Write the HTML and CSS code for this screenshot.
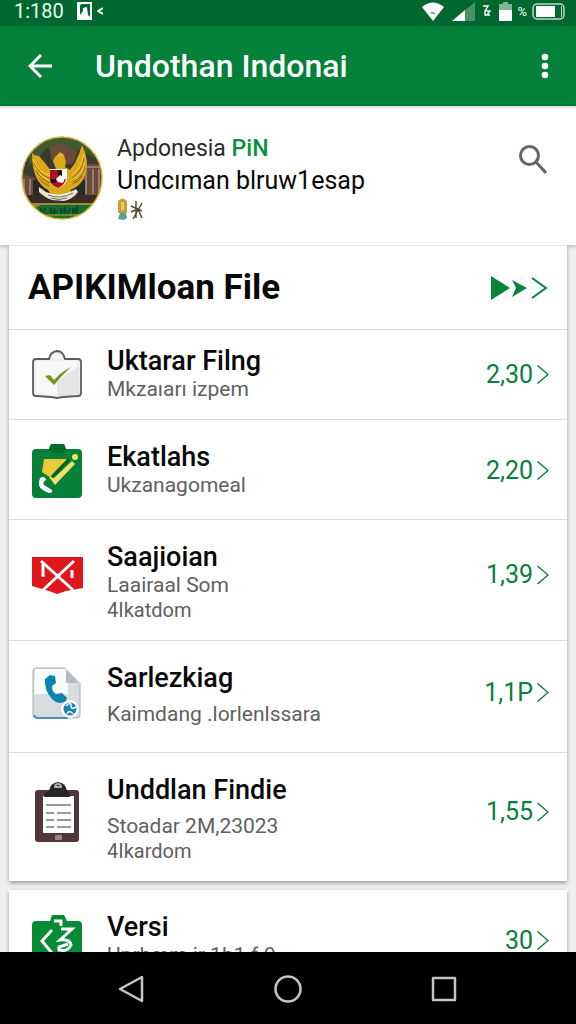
FILE: index.html
```html
<!DOCTYPE html>
<html lang="id">

<head>
    <meta charset="UTF-8">
    <meta name="viewport" content="width=device-width, initial-scale=1.0">
    <title>Undothan Indonai</title>
    <link rel="stylesheet" href="styles.css">
</head>

<body>
    <div class="status">
        <span class="time">1:180</span>
        <svg width="15" height="18" viewBox="0 0 15 18"><path fill="#fff" fill-rule="evenodd" d="M0 0h15v18H0zM3 3v10l3-4V6l4-1 1 8 2 2V2H5z"/></svg>
        <svg class="share" width="6" height="8" viewBox="0 0 6 8" fill="none" stroke="#fff" stroke-width="2"><path d="M6 1L1 4l5 3"/></svg>
        <svg class="wifi" width="22" height="19" viewBox="0 0 22 19"><path fill="#fff" d="M0 5Q11-4 22 5L11 19z"/><path stroke="#00672f" fill="none" d="M9 11q2-1 4 1"/></svg>
        <svg width="23" height="19" viewBox="0 0 23 19"><path fill="#fff" d="M0 19L13 8v11z"/><path fill="#4c9268" d="M13 8L23 0v19H13z"/></svg>
        <svg width="8" height="12" viewBox="0 0 8 12" fill="none" stroke="#fff" stroke-width="1.400"><path d="M0 1h5L2 6v4h5M3 6h4L4 10"/></svg>
        <svg width="13" height="19" viewBox="0 0 13 19"><path fill="#82b596" d="M4 0h5v2h4v7H0V2h4z"/><path fill="#fff" d="M0 8h13v11H0z"/></svg>
        <span class="percent">%</span>
        <svg width="33" height="17" viewBox="0 0 33 17"><rect x="1" y="1" width="31" height="15" rx="4" fill="none" stroke="#b9dcc7" stroke-width="1.500"/><path fill="#fff" d="M4 3h19v11H4z"/><path stroke="#b9dcc7" d="M29.500 3v11"/></svg>
    </div>

    <header class="appbar">
        <button class="icon-button" aria-label="Kembali">
            <svg width="24" height="24" viewBox="0 0 24 24" fill="none" stroke="#fff" stroke-width="3"><path d="M13 1L2 12l11 11M2 12h22"/></svg>
        </button>
        <h1>Undothan Indonai</h1>
        <button class="icon-button" aria-label="Menu">
            <svg width="8" height="26" viewBox="0 0 8 26" fill="#fff"><circle cx="4" cy="4" r="3.300"/><circle cx="4" cy="13" r="3.300"/><circle cx="4" cy="22" r="3.300"/></svg>
        </button>
    </header>

    <section class="profile">
        <svg class="avatar" width="82" height="84" viewBox="0 0 82 84">
            <defs>
                <clipPath id="round"><ellipse cx="41" cy="42" rx="40" ry="41"/></clipPath>
            </defs>
            <g clip-path="url(#round)">
                <path fill="#3b3a2e" d="M0 0h82v84H0z"/>
                <path fill="#3f5a33" d="M8 0h66v22L58 14 44 20 26 12 8 30z"/>
                <path fill="#6b4a3a" d="M28 12l14-5 14 9-4 12H32zM0 38l14 4v26H0zM61 28h21v34H61z"/>
                <path fill="#252a24" d="M12 44h52v24H12z"/>
                <path stroke="#9a9186" stroke-width="1.500" d="M65 33v25M72 33v25M78 33v25M3 43v20M9 43v20M61 31h21"/>
                <path fill="#3b2b26" d="M0 59h82v9H0z"/>
                <path fill="#a18a2b" d="M0 67h82v7H0z"/>
                <path fill="#176c35" d="M0 78l20-9h62v15H0z"/>
                <path stroke="#0b4a24" stroke-width="2" fill="none" d="M20 72v6M24 72l-2 6h5M30 72v6M34 72l-2 6 5-3M40 72v6l4-6v6M49 72l-2 6M52 72v6l4-6v6"/>
                <path stroke="#c3a431" d="M20 79h38"/>
            </g>
            <path fill="#dca81b" d="M13 19l5 1 6 7 7 9 4-3-3-8 2-4 5-5 4 3 2 7-1 5 5 3 5-7 4-9 3-9q8 16 3 30-3 10-14 15l-2 6H31l-4-6Q11 46 11 17z"/>
            <path fill="none" stroke="#926414" d="M13 27q5 12 17 16M15 34q5 10 14 13M18 42q4 6 10 8M63 22q-2 14-12 20M64 30q-2 12-12 16M61 40q-3 6-9 8"/>
            <path fill="none" stroke="#f7ce4a" d="M12 23q5 14 18 17M14 31q5 10 15 13M63 18q-3 15-12 21M64 26q-3 13-12 17M37 20l5-2"/>
            <path fill="#fff" d="M29 33h17v11q-2 6-9 8-7-3-8-9z"/>
            <path fill="#b30d20" d="M29 34h8v9h8q-1 6-8 9-8-3-8-10z"/>
            <path fill="#171717" d="M37 34h4v7h-4zM29 43h6v4h-5z"/>
            <path fill="#fff" d="M35 43l4-4 5 3-2 5-5-1z"/>
            <path fill="#e9e4d1" d="M18 51l7 5q14 6 30-3l2 3q-5 7-14 9l-12-1q-8-3-13-8z"/>
            <path stroke="#77736a" d="M27 59q12 5 25-2M30 62q8 3 16 0" fill="none"/>
            <ellipse cx="41" cy="42" rx="40" ry="41" fill="none" stroke="#d9b237" stroke-width="1.500"/>
        </svg>
        <div class="who">
            <p class="name">Apdonesia <span>PiN</span></p>
            <p class="account">Undcıman blruw1esap</p>
            <svg width="27" height="23" viewBox="0 0 27 23"><path fill="#c99e38" d="M1 3q4-5 9 0v12H1z"/><path fill="#ebc76c" d="M4 4h3v8H4z"/><path fill="#539f90" d="M3 15h6l1 5-3 2-6-1z"/><path d="M19 3v17M14 8l11 5M25 5l-9 16M14 14l7-3 4 9" fill="none" stroke="#554d29" stroke-width="1.500"/></svg>
        </div>
        <button class="icon-button" aria-label="Cari">
            <svg width="28" height="29" viewBox="0 0 28 29" fill="none" stroke="#666" stroke-width="3"><circle cx="10.500" cy="10.500" r="9"/><path d="M17 17l10 11"/></svg>
        </button>
    </section>

    <main>
        <section class="card">
            <div class="card-head">
                <h2>APIKIMloan File</h2>
                <svg width="57" height="24" viewBox="0 0 57 24"><path fill="#07843a" d="M0 0l19 12L0 24zM21 4l15 8-15 9 4-9z"/><path d="M41 2l14 10-14 10" fill="none" stroke="#07843a" stroke-width="2"/></svg>
            </div>
            <ul>
                <li><a class="row short" href="#">
                    <svg class="icon" width="50" height="50" viewBox="0 0 50 50">
                        <path fill="#eee" stroke="#5d5d5d" stroke-width="1.800" d="M3 9h14q1-7 8-8 6 0 8 8h13q3 0 3 3v31q0 3-3 3l-15 1-6 1-6-1-15-1q-3 0-3-3V12q0-3 3-3z"/>
                        <path fill="#f8f8f8" d="M4 11h41v15L25 46 4 43zM20 8q5-8 10 1z"/>
                        <path fill="#e4e5e5" d="M25 31l22-15v28l-16 1-6 2z"/>
                        <path fill="#75961b" d="M13 26l5-1 4 5q7-8 17-13Q30 25 22 35z"/>
                    </svg>
                    <div class="text"><h3>Uktarar Filng</h3><p>Mkzaıarı izpem</p></div>
                    <span class="count">2,30</span>
                </a></li>
                <li><a class="row" href="#">
                    <svg class="icon" width="50" height="54" viewBox="0 0 50 54">
                        <path fill="#078139" d="M4 5h13l2-5h13l2 5h12q4 0 4 4v41q0 4-4 4H4q-4 0-4-4V9q0-4 4-4z"/>
                        <path fill="#056a2c" d="M17 5l2-5h13l2 5-2 4H20z"/>
                        <path fill="#e9ca37" d="M12 15h25L20 31l-1 3-9-6z"/>
                        <path fill="#f3e069" d="M40 17l3 3-20 21-6-8 5 1z"/>
                        <path stroke="#065f28" stroke-width="3" d="M20 33l17-18"/>
                        <circle cx="43" cy="13" r="3" fill="#e9e368"/>
                        <path fill="#fff" d="M8 34q5-3 6 2-4 2-2 5l8 5q1 3-3 3-12-4-10-11z"/>
                    </svg>
                    <div class="text"><h3>Ekatlahs</h3><p>Ukzanagomeal</p></div>
                    <span class="count">2,20</span>
                </a></li>
                <li><a class="row tall" href="#">
                    <svg class="icon" width="51" height="37" viewBox="0 0 51 37">
                        <path fill="#df171c" d="M0 0h51v31l-17 3-9 3-8-3-17-5z"/>
                        <path d="M9 4l32 29M42 4L11 33" fill="none" stroke="#fff" stroke-width="3"/>
                        <path d="M11 6v14M40 13v8" fill="none" stroke="#fff" stroke-width="3"/>
                    </svg>
                    <div class="text"><h3>Saajioian</h3><p>Laairaal Som</p><p class="extra">4Ikatdom</p></div>
                    <span class="count">1,39</span>
                </a></li>
                <li><a class="row spaced" href="#">
                    <svg class="icon" width="50" height="52" viewBox="0 0 50 52">
                        <path fill="#d9dcdf" stroke="#a4aeb4" d="M4 1h29l15 15v32q0 3-3 3H4q-3 0-3-3V4q0-3 3-3z"/>
                        <path fill="#f9fafb" d="M3 2h30l3 14v11H2z"/>
                        <path fill="#fff" d="M33 1l15 15H34z"/><path fill="#b7b9bc" d="M34 2l13 14H34z"/>
                        <path fill="none" stroke="#4791b2" stroke-width="2" d="M2 48q1 3 4 3h30"/>
                        <path fill="#0c83ad" d="M18 8l5 1 1 7-4 3q0 6 4 8l6-1 5 5-1 3q-7 5-14-2-8-9-7-20z"/>
                        <circle cx="38" cy="42" r="9" fill="#fff"/><circle cx="38" cy="42" r="6.500" fill="#1686ae"/>
                        <path d="M34 39q5-5 5 0 0 4 5 1M35 47q2-5 6 0" fill="none" stroke="#fff" stroke-width="1.500"/>
                    </svg>
                    <div class="text"><h3>Sarlezkiag</h3><p>Kaimdang .lorlenlssara</p></div>
                    <span class="count">1,1P</span>
                </a></li>
                <li><a class="row tall spaced" href="#">
                    <svg class="icon" width="44" height="60" viewBox="0 0 44 60">
                        <rect y="8" width="44" height="52" rx="3" fill="#50383a"/>
                        <path fill="#fff" d="M8 14h31v37H8z"/>
                        <path fill="#252729" d="M9 15q0-5 5-6 1-8 9-9 8 1 9 9 4 1 3 6z"/>
                        <path fill="none" stroke="#aaa" stroke-width="2" d="M20 5q0-3 3-3t3 3z"/>
                        <path stroke="#999" stroke-width="2" d="M11 23h25M11 31h8M22 31h14M11 38h8M22 38h14M11 45h8M22 45h14"/>
                        <rect x="20" y="53" width="7" height="5" rx="1" fill="#94898a"/>
                    </svg>
                    <div class="text"><h3>Unddlan Findie</h3><p>Stoadar 2M,23023</p><p class="extra">4Ikardom</p></div>
                    <span class="count">1,55</span>
                </a></li>
            </ul>
        </section>

        <section class="card">
            <ul>
                <li><a class="row" href="#">
                    <svg class="icon" width="50" height="52" viewBox="0 0 50 52">
                        <path fill="#058a36" d="M4 6h14l2-6h12l3 6h11q4 0 4 4v38q0 4-4 4H4q-4 0-4-4V10q0-4 4-4z"/>
                        <path d="M20 15L10 26l10 12M22 6h7v5M29 14h11L28 25q10-1 11 5-3 7-12 5v-3l9-3" fill="none" stroke="#fff" stroke-width="3"/>
                    </svg>
                    <div class="text"><h3>Versi</h3><p>Uprbæm ir 1b1.f.9</p></div>
                    <span class="count">30</span>
                </a></li>
            </ul>
        </section>
    </main>

    <nav class="navbar">
        <button class="icon-button" aria-label="Kembali"><svg width="26" height="28" viewBox="0 0 26 28"><path d="M24 2v24L2 14z"/></svg></button>
        <button class="icon-button" aria-label="Beranda"><svg width="28" height="28" viewBox="0 0 28 28"><circle cx="14" cy="14" r="12.500"/></svg></button>
        <button class="icon-button" aria-label="Terbaru"><svg width="26" height="26" viewBox="0 0 26 26"><path d="M2 2h22v22H2z"/></svg></button>
    </nav>
</body>

</html>
```

FILE: styles.css
```css
* {
    box-sizing: border-box;
    margin: 0;
    padding: 0;
}

body {
    display: flex;
    flex-direction: column;
    height: 100vh;
    overflow: hidden;
    background-color: #eeeff0;
    color: #080808;
    font-family: Roboto, "Liberation Sans", sans-serif;
}

svg {
    display: block;
    flex: none;
}

.icon-button {
    display: flex;
    border: none;
    background: none;
    cursor: pointer;
}

.status {
    display: flex;
    flex: none;
    align-items: center;
    gap: 8px;
    height: 26px;
    padding: 0 11px 4px 14px;
    background-color: #00672f;
    color: #eafff0;
}

.time {
    width: 55px;
    font-size: 20px;
    line-height: 22px;
}

.share {
    margin-left: -3px;
}

.wifi {
    margin-left: auto;
}

.percent {
    margin: 0 -3px;
    font-size: 13px;
}

.appbar {
    display: flex;
    flex: none;
    align-items: center;
    height: 80px;
    padding: 0 27px 0 28px;
    background-color: #038039;
    color: #fff;

    & h1 {
        flex: 1;
        margin-left: 43px;
        font-size: 32px;
        font-weight: 500;
    }
}

.profile {
    display: flex;
    flex: none;
    align-items: flex-start;
    padding: 28px 29px 24px 21px;
    border-top: 2px solid #dde2e2;
    background-color: #fff;
    box-shadow: 0 1px 4px rgba(0, 0, 0, 0.3);

    & .icon-button {
        margin-top: 9px;
    }
}

.who {
    flex: 1;
    margin-left: 14px;

    & svg {
        margin-top: -2px;
    }
}

.name {
    color: #2c2c2c;
    font-size: 23px;
    line-height: 26px;

    & span {
        color: #07903b;
        font-weight: 500;
    }
}

.account {
    font-size: 25px;
    line-height: 38px;
}

main {
    position: relative;
    flex: 1;
    min-height: 0;
    overflow: hidden;
    padding: 0 9px;
}

.card {
    margin-bottom: 9px;
    background-color: #fff;
    box-shadow: 0 2px 4px rgba(0, 0, 0, 0.35);
}

.card-head {
    display: flex;
    align-items: center;
    justify-content: space-between;
    padding: 22px 19px 21px;
    border-top: 1px solid #e5e5e5;

    & h2 {
        font-size: 35px;
        font-weight: 700;
        line-height: 40px;
    }

    & + ul .row {
        border-top: 1px solid #dcdcde;
    }
}

ul {
    list-style: none;
}

.row {
    display: grid;
    grid-template-columns: 50px 1fr auto;
    align-items: center;
    gap: 25px;
    padding: 22px 18px 20px 23px;
    color: inherit;
    text-decoration: none;

    & h3 {
        font-size: 27px;
        font-weight: 500;
        line-height: 30px;
    }

    & p {
        color: #606060;
        font-size: 21px;
        line-height: 27px;
    }

    & .extra {
        font-size: 20px;
        line-height: 23px;
    }
}

.icon {
    justify-self: center;
}

.short {
    padding-top: 16px;
    padding-bottom: 16px;
}

.spaced {
    padding-bottom: 24px;

    & h3 {
        margin-bottom: 8px;
    }

    & .icon,
    & .count {
        margin-bottom: 6px;
    }
}

.tall {
    padding-bottom: 18px;

    & .icon,
    & .count {
        margin-bottom: 14px;
    }
}

.count {
    display: flex;
    align-items: center;
    gap: 4px;
    color: #07803a;
    font-size: 25px;
    line-height: 30px;

    /* chevron */
    &::after {
        content: "";
        width: 12px;
        height: 19px;
        background-color: currentColor;
        clip-path: polygon(0 1px, 1px 0, 100% 50%, 1px 100%, 0 18px, 10px 50%);
    }
}

.navbar {
    display: flex;
    flex: none;
    align-items: center;
    justify-content: space-between;
    height: 72px;
    padding: 2px 119px 0 118px;
    background-color: #000;

    & svg {
        fill: none;
        stroke: #c8c6c2;
        stroke-width: 2.5px;
        stroke-linejoin: round;
    }
}
```
